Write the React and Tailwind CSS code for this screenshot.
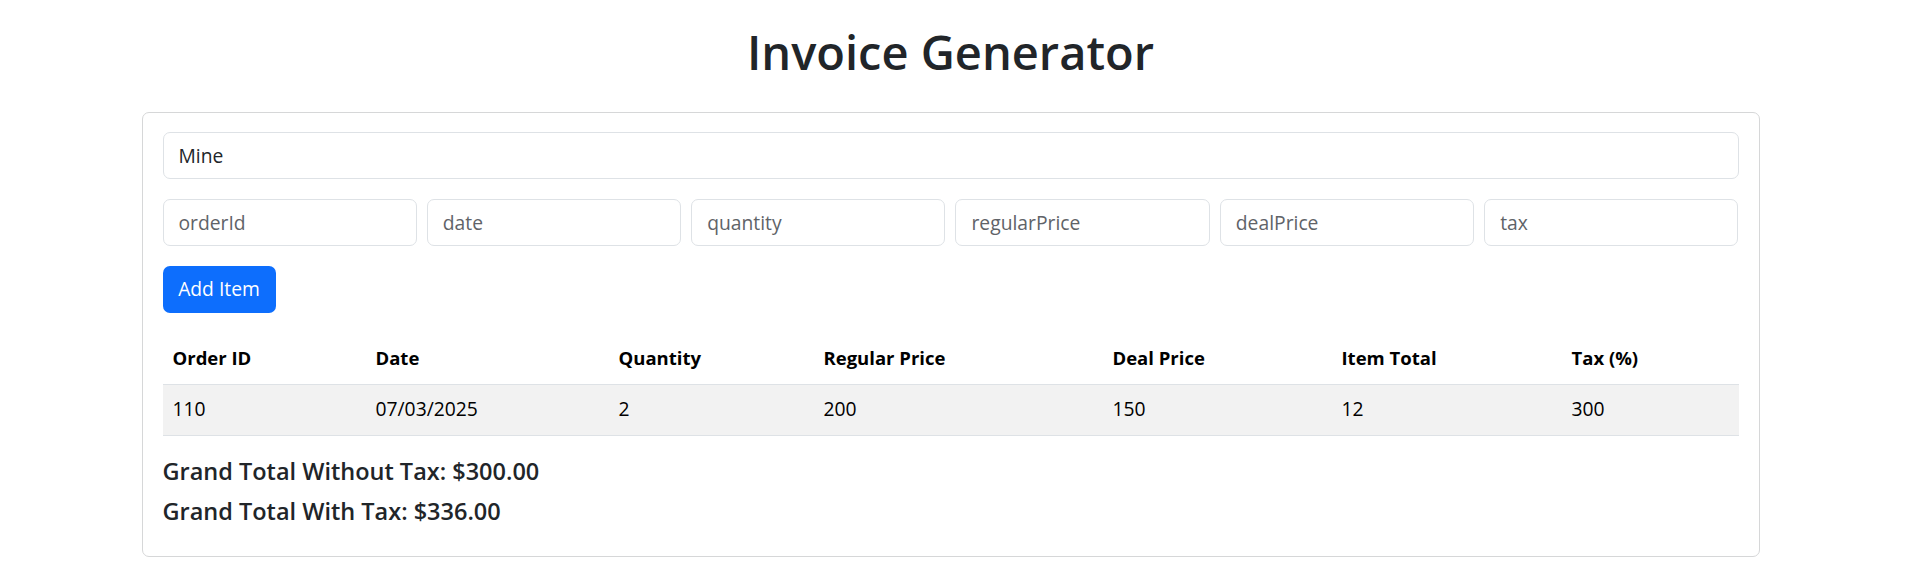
const items = [
  { orderId: '110', date: '07/03/2025', quantity: '2', regularPrice: '200', dealPrice: '150', itemTotal: '12', tax: '300' },
];

const placeholders = ['orderId', 'date', 'quantity', 'regularPrice', 'dealPrice', 'tax'];

export default function App() {
  return (
    <div className="min-h-[600px] bg-white font-['Open_Sans',sans-serif] text-[#212529]">
      <div className="w-[1901px] pt-[23px]">
        <h1 className="h-[58px] text-center text-[47px] font-semibold leading-[59px] text-[#212529]">
          Invoice Generator
        </h1>

        <div className="mx-auto mt-[31px] w-[1618px] rounded-[7px] border border-[#d6d7d8] bg-white px-5 pb-5 pt-[19px]">
          <input
            type="text"
            defaultValue="Mine"
            className="block h-[47px] w-full rounded-[7px] border border-[#dee2e6] px-[15px] text-[19.3px] text-[#212529] outline-none"
          />

          <div className="mt-5 grid grid-cols-6 gap-[10px]">
            {placeholders.map((p) => (
              <input
                key={p}
                type="text"
                placeholder={p}
                className="block h-[47px] w-full min-w-0 rounded-[7px] border border-[#dee2e6] px-[15px] text-[19.3px] text-[#212529] outline-none placeholder:text-[#5f6368]"
              />
            ))}
          </div>

          <button
            type="button"
            className="mt-5 flex h-[47px] w-[113px] items-center justify-center rounded-[7px] bg-[#0d6efd] text-[19.3px] text-white"
          >
            Add Item
          </button>

          <table className="mt-5 w-full table-fixed border-collapse text-left">
            <colgroup>
              <col className="w-[203px]" />
              <col className="w-[243px]" />
              <col className="w-[205px]" />
              <col className="w-[289px]" />
              <col className="w-[229px]" />
              <col className="w-[230px]" />
              <col />
            </colgroup>
            <thead>
              <tr className="h-[51px] border-b border-[#dee2e6]">
                <th className="px-[10px] text-[18.5px] font-bold text-black">Order ID</th>
                <th className="px-[10px] text-[18.5px] font-bold text-black">Date</th>
                <th className="px-[10px] text-[18.5px] font-bold text-black">Quantity</th>
                <th className="px-[10px] text-[18.5px] font-bold text-black">Regular Price</th>
                <th className="px-[10px] text-[18.5px] font-bold text-black">Deal Price</th>
                <th className="px-[10px] text-[18.5px] font-bold text-black">Item Total</th>
                <th className="px-[10px] text-[18.5px] font-bold text-black">Tax (%)</th>
              </tr>
            </thead>
            <tbody>
              {items.map((it) => (
                <tr key={it.orderId} className="h-[51px] border-b border-[#dee2e6] bg-[#f2f2f2]">
                  <td className="px-[10px] text-[19.3px] text-black">{it.orderId}</td>
                  <td className="px-[10px] text-[19.3px] text-black">{it.date}</td>
                  <td className="px-[10px] text-[19.3px] text-black">{it.quantity}</td>
                  <td className="px-[10px] text-[19.3px] text-black">{it.regularPrice}</td>
                  <td className="px-[10px] text-[19.3px] text-black">{it.dealPrice}</td>
                  <td className="px-[10px] text-[19.3px] text-black">{it.itemTotal}</td>
                  <td className="px-[10px] text-[19.3px] text-black">{it.tax}</td>
                </tr>
              ))}
            </tbody>
          </table>

          <h5 className="mt-5 text-[23.5px] font-semibold leading-[30px] text-[#212529]">Grand Total Without Tax: $300.00</h5>
          <h5 className="mt-[10px] mb-[10px] text-[23.5px] font-semibold leading-[30px] text-[#212529]">Grand Total With Tax: $336.00</h5>
        </div>
      </div>
    </div>
  );
}
